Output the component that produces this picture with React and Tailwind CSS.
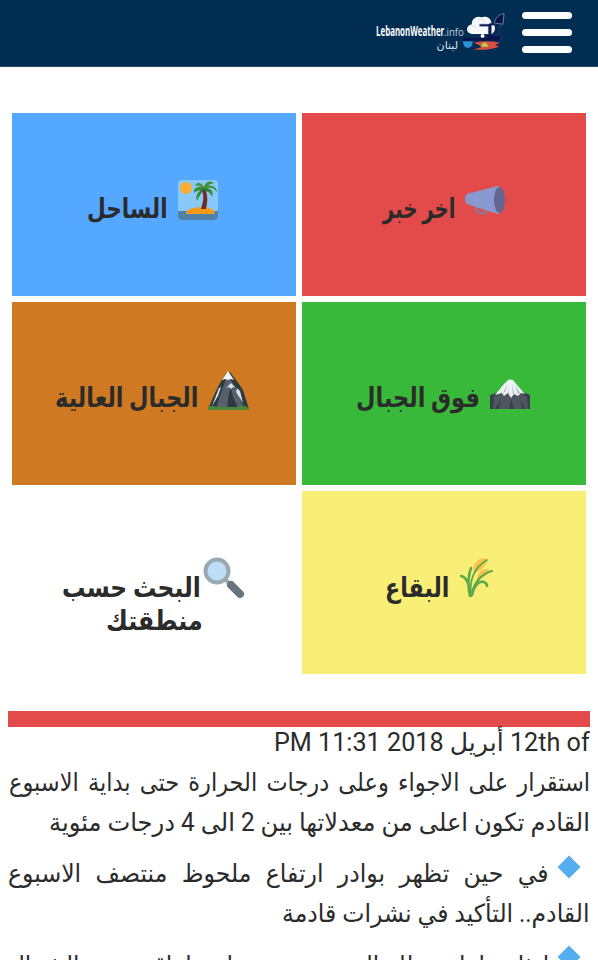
import { useLayoutEffect, useRef, useState } from "react";

// Stretches or narrows one line of text to the width of its box.
function Fit({ className = "", textClass = "", ltr = false, children }) {
  const box = useRef(null);
  const text = useRef(null);
  const [scale, setScale] = useState(1);
  useLayoutEffect(() => {
    setScale(box.current.offsetWidth / text.current.offsetWidth);
  }, []);
  return (
    <div ref={box} dir={ltr ? "ltr" : "rtl"} className={`shrink-0 whitespace-nowrap ${className}`}>
      <span
        ref={text}
        className={`inline-block ${ltr ? "origin-left" : "origin-right"} ${textClass}`}
        style={{ transform: `scaleX(${scale})` }}
      >
        {children}
      </span>
    </div>
  );
}

function Megaphone() {
  return (
    <svg viewBox="0 0 40 38" className="h-[38px] w-10 shrink-0">
      <path d="M9 21c0 6 3 10 8 10s8-4 8-7l-4-1c0 3-2 5-4 5-3 0-5-3-5-6z" fill="#99718b" />
      <path d="M3 9.500 33 2c7 2 7 26 0 28L3 20.500C-1 19.500-1 10.500 3 9.500z" fill="#8899cf" />
      <ellipse cx="34.500" cy="16" rx="5.500" ry="13" fill="#646691" />
    </svg>
  );
}

function Island() {
  return (
    <svg viewBox="0 0 40 40" className="size-10 shrink-0">
      <rect width="40" height="40" rx="4" fill="#88c9f9" />
      <path d="M0 31h40v5a4 4 0 0 1-4 4H4a4 4 0 0 1-4-4z" fill="#5082a8" />
      <circle cx="8" cy="8" r="6" fill="#ffac33" />
      <path d="M8 34c-1-4 7-7 16-7s15 4 12 7z" fill="#f99a1c" />
      <path d="M26 7c4 7 4 14 2 22h-5c2-7 4-14 0-20z" fill="#702a20" />
      <path d="M26 7c-3-5-8-5-9-1 3-1 5 0 7 1-5-1-9 2-8 6 2-2 5-3 8-4-4 3-7 7-5 12 2-5 5-8 7-12 3 1 6 3 8 8 2-4 0-8-5-9 4-1 7 0 10 4 0-4-4-7-9-6 2-2 4-3 6-2-2-4-8-3-10 3z" fill="#3e9132" />
      <path d="m26 8 10 4-7-2 5 4-8-4-6 5 3-5-6 1z" fill="#28782d" />
    </svg>
  );
}

function Fuji() {
  return (
    <svg viewBox="0 0 40 30" className="h-[30px] w-10 shrink-0">
      <path d="M0 16 9 13h24l7 3v14H0z" fill="#35424b" />
      <path d="M4 18 9 15h23l5 3 1 12h-3l-4-9 1 9h-8l-3-10-2 10H9l2-10-6 10H3z" fill="#50565f" />
      <path d="M18 1q2-1 5 0l4 5 8 9-4-1-3 3-4-2-3 4-3-5-4 3-2-3-7 2 8-10z" fill="#eef3f7" />
      <path d="m18 5-5 9 2-1zm4-1 1 12 1-2zm3 2 5 8-2 1zm-6 3-1 7 1-1z" fill="#aab8c2" />
    </svg>
  );
}

function Mountain() {
  return (
    <svg viewBox="0 0 42 40" className="h-10 w-[42px] shrink-0">
      <path d="M0 38 7 22l5-10 7-11h3l9 12 4 6 6 19z" fill="#2e3940" />
      <path d="m18 8-5 14-5 15h11l2-15 2-5 2 9 5 11h6L28 18 22 7z" fill="#56616b" />
      <path d="m20 0-6 9 3-1 3 1 3-1 3 1z" fill="#f1f5f7" />
      <path d="m11 17 2-1-3 9-6 10zm12-5-5 5 3-1 2 2 2-2 3 1zm6 5 3 3 3 12-7-11z" fill="#d6e0e8" />
      <path d="M0 36q4-2 8 0h20q7-3 13 1v2H0z" fill="#4b883c" />
    </svg>
  );
}

function Rice() {
  return (
    <svg viewBox="0 0 34 40" className="h-10 w-[34px] shrink-0">
      <g fill="#fbc34e">
        <path d="M14 15c-2-5 0-11 6-14 3-1 7-1 7 1 0 5-6 11-13 13z" />
        <path d="M17 21c1-7 5-10 10-10 3 0 3 2 2 3-3 4-7 7-12 7z" />
      </g>
      <g fill="none" stroke="#5caa48" strokeLinecap="round">
        <path d="M11 38C9 23 14 9 27 2" strokeWidth="1.800" />
        <path d="M11 38C14 24 21 16 32 13" strokeWidth="2.200" />
        <path d="M10 38C10 28 7 19 1 18M10 38C7 26 9 15 11 10M12 37c2-9 7-15 12-13 2 1 3 3 3 4" strokeWidth="2.600" />
      </g>
    </svg>
  );
}

function Magnifier() {
  return (
    <svg viewBox="0 0 42 42" className="size-[42px] shrink-0">
      <path d="m23 23 5 5" stroke="#9aaab4" strokeWidth="4" />
      <path d="m28 28 9 9" stroke="#66757f" strokeWidth="8" strokeLinecap="round" />
      <circle cx="14" cy="14" r="11.500" fill="#bddef6" stroke="#99a9b3" strokeWidth="4" />
    </svg>
  );
}

function Diamond() {
  return (
    <svg viewBox="0 0 24 24" className="mt-px size-6 shrink-0">
      <path d="M12 .5 23.500 12 12 23.500.5 12z" fill="#55acee" />
    </svg>
  );
}

function LogoMark() {
  return (
    <svg viewBox="0 0 44 40" className="mt-3 h-10 w-[43px] shrink-0">
      <path d="M9 22c-7-1-6-9 0-10 0-6 5-9 10-7 5-2 10 1 10 6 5 1 5 9 0 11z" fill="#f7f9fb" />
      <path d="M8 14c2-1 4 0 5 2m3-9c3-1 6 1 6 4" fill="none" stroke="#cbd5de" />
      <path d="M32 11C33 5 37 2 42 1l-1 11z" fill="#08154c" stroke="#6980a5" />
      <path d="M11 31q13-3 27 0l-5 2 4 2q-10 4-26 3l9-3z" fill="#d94d43" />
      <path d="M17 12h9l2-1h5v2h-4v10h8V14h2v14H24v-3H12v-2h14V14h-9z" fill="#08154c" stroke="#46618e" strokeWidth=".4" />
      <path d="M0 26h37v3H0z" fill="#08154c" />
      <path d="M0 29.500h10c0 9-10 9-10 0z" fill="#2a91d2" />
      <path d="m18 35 2-4h4l2 4z" fill="#b6ce45" />
      <circle cx="20" cy="24" r="2" fill="#fff" />
    </svg>
  );
}

function Tile({ color, pad, icon, children }) {
  return (
    <div dir="rtl" className={`flex h-[182.5px] items-start ${color} ${pad}`}>
      {icon}
      {children}
    </div>
  );
}

const tileText = "text-[27px] leading-[34px] font-bold";
const line = "text-[25px] leading-[40px]";

export default function App() {
  return (
    <div
      dir="rtl"
      className="h-[960px] w-[598px] overflow-hidden bg-white font-['Roboto','DejaVu_Sans',sans-serif] text-[#2b2b2b]"
    >
      <header dir="ltr" className="flex h-[67px] items-start border-b border-[#27496a] bg-[#022d52] pl-[376px]">
        <div className="flex w-[87px] flex-col pt-[21px] text-white">
          <div className="flex items-baseline">
            <Fit ltr className="w-[68px] leading-[0]" textClass="font-['Open_Sans',sans-serif] text-[15px] leading-[18px] font-bold">LebanonWeather</Fit>
            <Fit ltr className="w-5 leading-[0]" textClass="font-['Open_Sans',sans-serif] text-[10.5px] leading-[18px] text-[#c5d2df]">.info</Fit>
          </div>
          <Fit className="-mt-[2px] ml-[61px] w-[21px] leading-[0]" textClass="text-[11px] leading-[14px] text-[#dce5ed]">لبنان</Fit>
        </div>
        <LogoMark />
        <div className="mt-3 ml-4 flex flex-col gap-[9.5px]">
          <span className="h-[7.3px] w-[50px] rounded-full bg-white" />
          <span className="h-[7.3px] w-[50px] rounded-full bg-white" />
          <span className="h-[7.3px] w-[50px] rounded-full bg-white" />
        </div>
      </header>

      <main>
        <section className="mx-3 mt-[46px] grid grid-cols-2 gap-[6.5px]">
          <Tile color="bg-[#e34b4b]" pad="pt-[71px] pr-[81px]" icon={<Megaphone />}>
            <Fit className="mt-2 mr-[10px] w-[73px]" textClass={tileText}>اخر خبر</Fit>
          </Tile>
          <Tile color="bg-[#55a8ff]" pad="pt-[67px] pr-[78px]" icon={<Island />}>
            <Fit className="mt-3 mr-[10px] w-[81px]" textClass={tileText}>الساحل</Fit>
          </Tile>
          <Tile color="bg-[#39b939]" pad="pt-[77px] pr-[56px]" icon={<Fuji />}>
            <Fit className="mt-[2px] mr-[10px] w-[124px]" textClass={tileText}>فوق الجبال</Fit>
          </Tile>
          <Tile color="bg-[#cf7a23]" pad="pt-[69px] pr-[46px]" icon={<Mountain />}>
            <Fit className="mt-[10px] mr-[9px] w-[143px]" textClass={tileText}>الجبال العالية</Fit>
          </Tile>
          <Tile color="bg-[#faef76]" pad="pt-[67px] pr-[92px]" icon={<Rice />}>
            <Fit className="mt-[13px] mr-[11px] w-[64px]" textClass={tileText}>البقاع</Fit>
          </Tile>
          <Tile color="bg-white" pad="pt-[66px] pr-[51px]" icon={<Magnifier />}>
            <div className="mt-[14px]">
              <Fit className="mr-[2px] w-[139px]" textClass={tileText}>البحث حسب</Fit>
              <Fit className="-mt-px w-[97px]" textClass={tileText}>منطقتك</Fit>
            </div>
          </Tile>
        </section>

        <section className="mx-2 mt-[37px]">
          <div className="h-4 bg-[#e34b4b]" />
          <Fit className="-mt-1 w-[316px]" textClass={line}>12th of أبريل 2018 11:31 PM</Fit>
          <Fit className="w-[581px]" textClass={`${line} [word-spacing:4px]`}>استقرار على الاجواء وعلى درجات الحرارة حتى بداية الاسبوع</Fit>
          <Fit className="w-[541px]" textClass={line}>القادم تكون اعلى من معدلاتها بين 2 الى 4 درجات مئوية</Fit>
          <div className="mt-[11px] flex pr-[9px]">
            <Diamond />
            <Fit className="mr-[8px] w-[541px]" textClass={`${line} [word-spacing:9px]`}>في حين تظهر بوادر ارتفاع ملحوظ منتصف الاسبوع</Fit>
          </div>
          <Fit className="w-[308px]" textClass={line}>القادم.. التأكيد في نشرات قادمة</Fit>
          <div className="mt-[10px] flex pr-[9px]">
            <Diamond />
            <Fit className="mt-[2px] mr-[8px] w-[541px]" textClass={`${line} [word-spacing:4px]`}>انذارة امامة ظل الفترة مية منتظرة اماقتية من الشمال</Fit>
          </div>
        </section>
      </main>
    </div>
  );
}
